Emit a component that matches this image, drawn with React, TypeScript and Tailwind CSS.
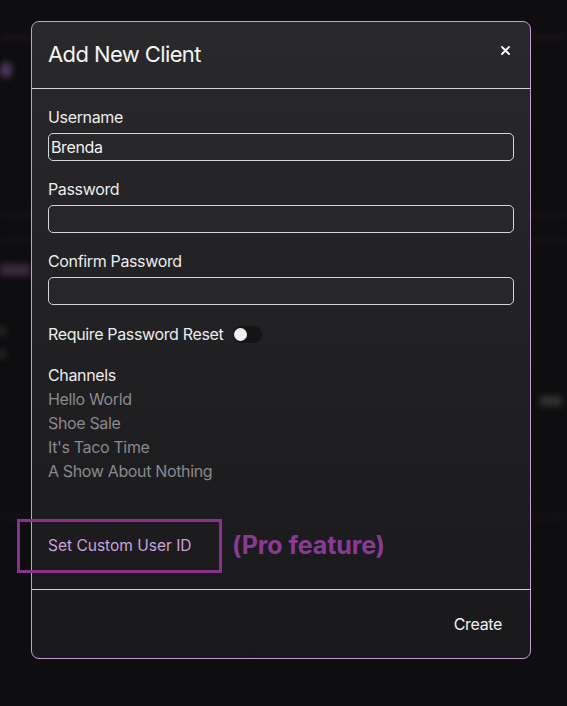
import React from "react";

function Field({ label, value, top }: { label: string; value?: string; top?: boolean }) {
  return (
    <div className={top ? "" : "mt-[18px]"}>
      <div className="text-[16px] leading-[20px] text-[#ececec]">{label}</div>
      <div className="mt-[6px] h-[28px] rounded-[5px] border border-[#d6d6d6] bg-[#272629] px-[2px] flex items-center text-[16px] text-[#f2f2f2]">
        {value}
      </div>
    </div>
  );
}

export default function App() {
  return (
    <div
      className="relative w-[567px] h-[706px] overflow-hidden bg-[#0e0d0f]"
      style={{ fontFamily: "Inter, 'Noto Sans', sans-serif" }}
    >
      {/* blurred backdrop */}
      <div className="absolute inset-0 blur-[3px]">
        <div className="absolute left-0 right-0 top-[36px] h-[2px] bg-[#2a1f2c]" />
        <div className="absolute left-0 top-[62px] w-[12px] h-[16px] rounded-full bg-[#4e3757]" />
        <div className="absolute left-0 right-0 top-[214px] h-[2px] bg-[#251c27]" />
        <div className="absolute left-0 right-0 top-[240px] h-[2px] bg-[#221a24]" />
        <div className="absolute left-0 top-[264px] w-[30px] h-[12px] bg-[#3a2a40]" />
        <div className="absolute left-0 top-[327px] w-[5px] h-[8px] bg-[#333]" />
        <div className="absolute left-0 top-[350px] w-[5px] h-[8px] bg-[#333]" />
        <div className="absolute left-[540px] top-[396px] w-[22px] h-[10px] bg-[#333]" />
        <div className="absolute left-0 right-0 top-[516px] h-[2px] bg-[#221a24]" />
      </div>

      {/* modal */}
      <div className="absolute left-[31px] top-[21px] w-[500px] h-[638px] rounded-[8px] border border-[#c89bd4] bg-gradient-to-b from-[#29282b] to-[#19181b] flex flex-col tracking-[-0.35px]">
        <div className="relative h-[67px] flex items-center pl-[16px] border-b border-[#d4d4d4]">
          <div className="text-[22px] text-[#f4f4f4] tracking-[-0.6px] -mt-[1px]">Add New Client</div>
          <svg
            className="absolute right-[20px] top-[24px]"
            width="9"
            height="9"
            viewBox="0 0 9 9"
            fill="none"
            stroke="#ffffff"
            strokeWidth="1.8"
            strokeLinecap="round"
          >
            <path d="M1 1L8 8M8 1L1 8" />
          </svg>
        </div>
        <div className="flex-1 px-[16px] pt-[18px] flex flex-col">
          <Field label="Username" value="Brenda" top />
          <Field label="Password" />
          <Field label="Confirm Password" />
          <div className="mt-[18px] flex items-center h-[22px]">
            <span className="text-[16px] text-[#ececec]">Require Password Reset</span>
            <div className="ml-[10px] w-[29px] h-[17px] rounded-full bg-[#141316] flex items-center pl-[1px]">
              <div className="w-[13px] h-[13px] rounded-full bg-[#f0f0f0]" />
            </div>
          </div>
          <div className="mt-[18px] text-[16px] leading-[24px] text-[#ececec]">Channels</div>
          <div className="text-[16px] leading-[24px] text-[#8a8a8c]">
            <div>Hello World</div>
            <div>Shoe Sale</div>
            <div>It's Taco Time</div>
            <div>A Show About Nothing</div>
          </div>
          <div className="mt-[36px] -ml-[31px] flex items-center">
            <div className="w-[205px] h-[54px] border-[3px] border-[#8a3190] flex items-center pl-[28px] text-[15.5px] tracking-[0px] text-[#c9a3d9]">
              Set Custom User ID
            </div>
            <div className="ml-[10px] text-[25px] font-bold text-[#8b3a94] tracking-[-0.1px]">(Pro feature)</div>
          </div>
        </div>
        <div className="h-[69px] border-t border-[#d4d4d4] flex items-center justify-end pr-[28px]">
          <span className="text-[16px] text-[#f2f2f2]">Create</span>
        </div>
      </div>
    </div>
  );
}
